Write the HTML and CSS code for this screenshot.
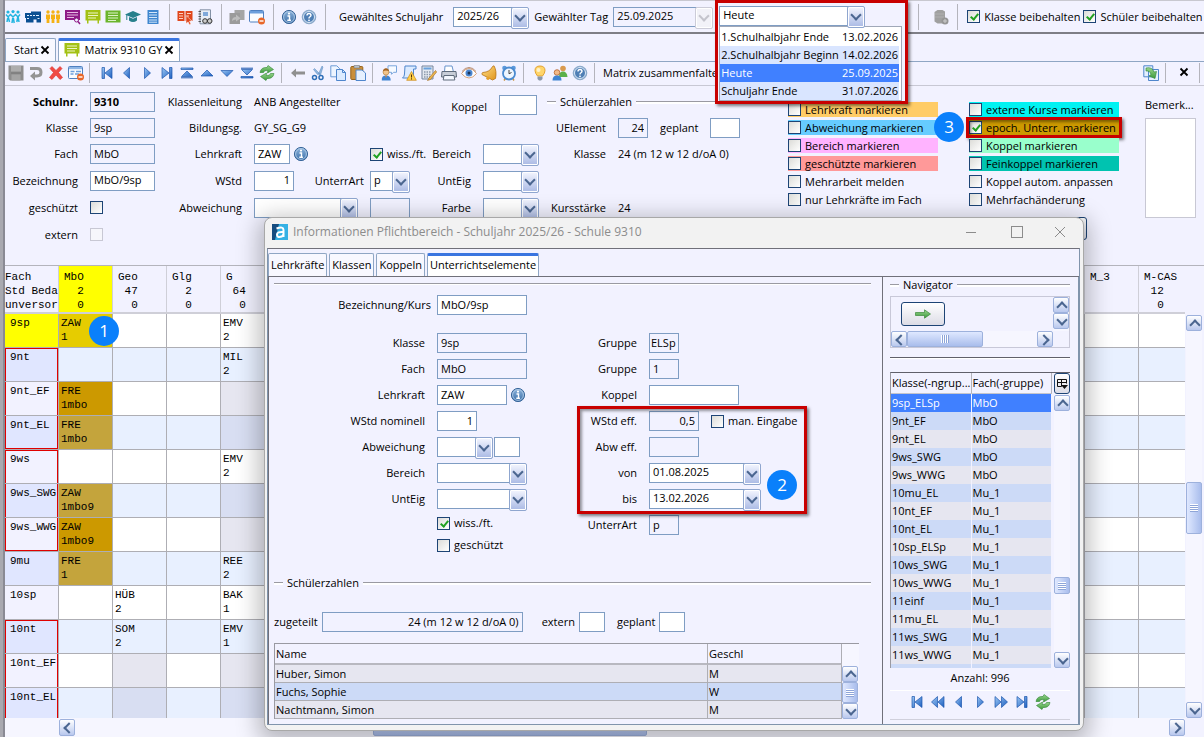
FILE: index.html
```html
<!DOCTYPE html>
<html lang="de">
<head>
   <meta charset="UTF-8">
   <meta name="viewport" content="width=device-width, initial-scale=1.0">
   <title>Matrix 9310 GY</title>
   <link rel="stylesheet" href="styles.css">
</head>
<body>
   <svg class="sprite" aria-hidden="true">
      <defs>
         <linearGradient id="g-blue" x1="0" y1="0" x2="1" y2="1">
            <stop offset="0" stop-color="#9cc8f5"/><stop offset="1" stop-color="#1d5fc0"/>
         </linearGradient>
         <linearGradient id="g-round" x1="0" y1="0" x2="0" y2="1">
            <stop offset="0" stop-color="#8db4dc"/><stop offset="1" stop-color="#3a6ea8"/>
         </linearGradient>
         <linearGradient id="g-green" x1="0" y1="0" x2="0" y2="1">
            <stop offset="0" stop-color="#9bd68f"/><stop offset="1" stop-color="#3b9a3a"/>
         </linearGradient>
         <linearGradient id="g-gold" x1="0" y1="0" x2="1" y2="1">
            <stop offset="0" stop-color="#ffe08a"/><stop offset="1" stop-color="#e0941c"/>
         </linearGradient>
      </defs>
      <symbol id="people" viewBox="0 0 16 16">
         <g fill="currentColor"><circle cx="3" cy="3" r="1.6"/><circle cx="8" cy="2.6" r="1.6"/><circle cx="13" cy="3" r="1.6"/></g>
         <path d="M1 5.5L3 8L5.5 5.5L8 8L10.5 5.5L13 8L15 5.5M3 7L2 13M3 7L4.5 13M8 7L7 14M8 7L9.2 14M13 7L11.8 13M13 7L14 13" fill="none" stroke="currentColor" stroke-width="1.5"/>
      </symbol>
      <symbol id="people-solid" viewBox="0 0 16 16">
         <g fill="currentColor"><circle cx="3" cy="3" r="1.7"/><circle cx="8" cy="3" r="1.7"/><circle cx="13" cy="3" r="1.7"/><path d="M1 5.5h4v4.5h-.6v4H1.6v-4H1zM6 5.5h4v4.5h-.6v4H6.6v-4H6zM11 5.5h4v4.5h-.6v4h-2.8v-4H11z"/></g>
      </symbol>
      <symbol id="school" viewBox="0 0 16 16">
         <path d="M0 4h6V2.500h10V13.500h-4.500V10.500h-3v3H1V9H0z" fill="#0a4f92"/>
         <path d="M2 6.500h2M5 6.500h2M8 6.500h2M11 6.500h3M2 9.500h2M12.500 9.500h2" stroke="#dfeeff" stroke-width="1.200"/>
      </symbol>
      <symbol id="board-search" viewBox="0 0 16 16">
         <path d="M0 1h15v10H0z" fill="#8e1a87"/><path d="M2 3.500h11M2 6h11M2 8.500h7" stroke="#e5b8e3"/>
         <circle cx="11.500" cy="11" r="2" fill="#f2f2ff" stroke="#8e1a87"/><path d="M13 12.500l2 2.500" stroke="#8e1a87" stroke-width="1.500"/>
      </symbol>
      <symbol id="board" viewBox="0 0 16 16">
         <path d="M.5 1h15v10.500H14v3h-1.500v-3h-9v3H2v-3H.5z" fill="#a3c114"/><path d="M3 4h10M3 6.500h10M3 9h8" stroke="#eef5c4"/>
      </symbol>
      <symbol id="list-green" viewBox="0 0 16 16">
         <path d="M.5 1.500h15v12H.5z" fill="#6bb52c"/><path d="M3 4h10M3 6.500h10M3 9h10M3 11.500h8" stroke="#dbf2c7"/>
      </symbol>
      <symbol id="hat" viewBox="0 0 16 16">
         <path d="M8 2l8 3.500-8 3.500-8-3.500z" fill="#277f8c"/><path d="M4 8v3.500q4 3 8 0V8L8 9.800z" fill="#277f8c"/><path d="M1.800 6v5" stroke="#277f8c"/>
      </symbol>
      <symbol id="sheet" viewBox="0 0 16 16">
         <path d="M2.500 1h11v14h-11z" fill="#3f86cf"/><path d="M4 3.500h8M4 6h8M4 8.500h8M4 11h8M4 13.200h8" stroke="#d3e6fa"/>
      </symbol>
      <symbol id="book-red" viewBox="0 0 16 16">
         <path d="M.5 2h7v10h-7zM8.500 2h7v10h-7z" fill="#e0461c"/><path d="M2 4.500h4M2 7h4M2 9.500h4M10 4.500h4M10 7h2" stroke="#ffd2c2"/>
         <path d="M9 6.500l6 5.500-2.500.2 1.500 2.800-1.600.7-1.300-2.800L9 14.500z" fill="#e0461c" stroke="#fff" stroke-width=".5"/>
      </symbol>
      <symbol id="binder" viewBox="0 0 16 16">
         <path d="M3 .8h10.500v14H3z" fill="#e8eef6" stroke="#8391a5"/><path d="M6 3h5v4H6z" fill="#7fa9da"/>
         <path d="M1.500 2.500h2.500M1.500 5h2.500M1.500 7.500h2.500M1.500 10h2.500M1.500 12.500h2.500" stroke="#555"/>
         <circle cx="8" cy="12" r="2.300" fill="#ccc" stroke="#333"/><circle cx="12.700" cy="12" r="2.300" fill="#ccc" stroke="#333"/>
      </symbol>
      <symbol id="copy-grey" viewBox="0 0 16 16">
         <path d="M5.500 1h10v10h-10z" fill="#a5a5a5"/><path d="M.5 4h10.500v11H.5z" fill="#9b9b9b"/><path d="M3 12q0-4 4-4V5.500l4.500 3.700L7 12.500V10.500q-2.500 0-4 1.500z" fill="#bdbdbd"/>
      </symbol>
      <symbol id="window-minus" viewBox="0 0 16 16">
         <rect x=".5" y="1.500" width="14" height="11.500" rx="1" fill="#fafcff" stroke="#4f80c0"/><path d="M1 2h13v2.500H1z" fill="#6d9fdc"/>
         <circle cx="12.500" cy="12" r="3.500" fill="#e8672a"/><path d="M10.500 12h4" stroke="#fff" stroke-width="1.400"/>
      </symbol>
      <symbol id="form-minus" viewBox="0 0 16 16">
         <rect x=".5" y="1.500" width="14" height="12" rx="1" fill="#fafcff" stroke="#4f80c0"/><path d="M1 2h13v2.200H1z" fill="#8fb6e5"/>
         <path d="M2.500 6.500h4M8 6.500h5M2.500 9h3M7 9h4" stroke="#6d9fdc" stroke-width="1.400"/>
         <circle cx="12.500" cy="12" r="3.500" fill="#e8672a"/><path d="M10.500 12h4" stroke="#fff" stroke-width="1.400"/>
      </symbol>
      <symbol id="info" viewBox="0 0 16 16">
         <circle cx="8" cy="8" r="6.600" fill="url(#g-round)" stroke="#3a679b"/><circle cx="8" cy="8" r="5.400" fill="none" stroke="#b8d0ea" stroke-width=".8"/>
         <path d="M6.500 7h2v4M6.300 11.200h3.600" stroke="#fff" stroke-width="1.400" fill="none"/><circle cx="8" cy="4.600" r="1.100" fill="#fff"/>
      </symbol>
      <symbol id="help" viewBox="0 0 16 16">
         <circle cx="8" cy="8" r="6.800" fill="#7ba0c9" stroke="#8aa8c8"/><circle cx="8" cy="8" r="5.500" fill="#4f7fb5" stroke="#dce9f7"/>
         <path d="M6 6.500q0-2 2-2t2 1.800q0 1-1.300 1.700-.7.400-.7 1.500" stroke="#fff" stroke-width="1.400" fill="none"/><circle cx="8" cy="11.300" r=".9" fill="#fff"/>
      </symbol>
      <symbol id="db-grey" viewBox="0 0 16 16">
         <path d="M1.500 3l3-2h5l2.500 1.500v10L9 14.500H4.500l-3-2z" fill="#a0a0a0"/><path d="M2 5h9M2 8h9" stroke="#b0b0b0"/><circle cx="12" cy="12" r="3.500" fill="#959595"/><path d="M10 12h4M12 10v4" stroke="#ccc"/>
      </symbol>
      <symbol id="save" viewBox="0 0 16 16">
         <path d="M.5.500h15v15H2l-1.500-1.500z" fill="#8d8d8d"/><path d="M3 1h10v5.500H3z" fill="#adadad"/><path d="M3.500 9.500h9v6h-9z" fill="#a4a4a4"/><path d="M3 8h10" stroke="#777"/>
      </symbol>
      <symbol id="undo" viewBox="0 0 16 16">
         <path d="M2 3.500h7q4 0 4 3.700t-4 3.700H6" fill="none" stroke="#949494" stroke-width="3"/><path d="M7 6.500v9L2 11z" fill="#949494"/>
      </symbol>
      <symbol id="cross" viewBox="0 0 16 16">
         <path d="M2 3.500L4 1.500 8 5.500 12 1.500l2 2L10.500 7.500 14.500 12.500l-2.500 2L8 10 4 14.500l-2.500-2L5.500 7.500z" fill="#f04a44" stroke="#d8302c" stroke-width=".6"/>
      </symbol>
      <symbol id="first" viewBox="0 0 16 16"><path d="M3 2.500h2.500v11H3zM13 2.500v11L6 8z" fill="url(#g-blue)" stroke="#1c56ad" stroke-width=".7"/></symbol>
      <symbol id="last" viewBox="0 0 16 16"><path d="M10.500 2.500H13v11h-2.500zM3 2.500v11L10 8z" fill="url(#g-blue)" stroke="#1c56ad" stroke-width=".7"/></symbol>
      <symbol id="prev" viewBox="0 0 16 16"><path d="M10.500 2.500v11L4.500 8z" fill="url(#g-blue)" stroke="#1c56ad" stroke-width=".7"/></symbol>
      <symbol id="next" viewBox="0 0 16 16"><path d="M5.500 2.500v11l6-5.500z" fill="url(#g-blue)" stroke="#1c56ad" stroke-width=".7"/></symbol>
      <symbol id="back2" viewBox="0 0 16 16"><path d="M7.500 2.500v11L1.500 8zM14 2.500v11L8 8z" fill="url(#g-blue)" stroke="#1c56ad" stroke-width=".7"/></symbol>
      <symbol id="fwd2" viewBox="0 0 16 16"><path d="M2 2.500v11L8 8zM8.500 2.500v11l6-5.500z" fill="url(#g-blue)" stroke="#1c56ad" stroke-width=".7"/></symbol>
      <symbol id="top" viewBox="0 0 16 16"><path d="M2 3h12v1.500H2zM8 6l5.500 5.500h-11z" fill="url(#g-blue)" stroke="#1c56ad" stroke-width=".7"/><path d="M2 12.800h12" stroke="#1c56ad"/></symbol>
      <symbol id="bottom" viewBox="0 0 16 16"><path d="M2 11.500h12V13H2zM8 10l5.500-5.500h-11z" fill="url(#g-blue)" stroke="#1c56ad" stroke-width=".7"/><path d="M2 3.200h12" stroke="#1c56ad"/></symbol>
      <symbol id="up" viewBox="0 0 16 16"><path d="M8 5l6 6H2z" fill="url(#g-blue)" stroke="#1c56ad" stroke-width=".7"/></symbol>
      <symbol id="down" viewBox="0 0 16 16"><path d="M8 11.500l6-6H2z" fill="url(#g-blue)" stroke="#1c56ad" stroke-width=".7"/></symbol>
      <symbol id="refresh" viewBox="0 0 16 16">
         <path d="M1 7.500Q2 2 8 2.500L9 .5 14.500 4.500 8.500 8l.3-2.500Q5 5 4.500 7.500z" fill="url(#g-green)" stroke="#2f8433" stroke-width=".6"/>
         <path d="M15 8.500Q14 14 8 13.500L7 15.500 1.500 11.500 7.500 8l-.3 2.500q3.800.5 4.300-2z" fill="url(#g-green)" stroke="#2f8433" stroke-width=".6"/>
      </symbol>
      <symbol id="back" viewBox="0 0 16 16"><path d="M1 8l5-4.500v3h9v3H6v3z" fill="#909090"/></symbol>
      <symbol id="cut" viewBox="0 0 16 16">
         <path d="M8.500 9L12 1l1 1-2.500 8zM7.500 9.500L3.500 4.500 4.500 3.500 10 9z" fill="#8fb6df" stroke="#5a89bd" stroke-width=".5"/>
         <circle cx="4.500" cy="12.500" r="2" fill="none" stroke="#2f6fb8" stroke-width="1.500"/><circle cx="11" cy="12.500" r="2" fill="none" stroke="#2f6fb8" stroke-width="1.500"/>
      </symbol>
      <symbol id="copy" viewBox="0 0 16 16"><path d="M.8.800h6l3 3v8h-9z" fill="#eef5ff" stroke="#6d9cd6"/><path d="M6.500 4.500h6l3 3v8h-9z" fill="#dcebff" stroke="#4f86cc"/><path d="M12.500 4.500v3h3" fill="none" stroke="#4f86cc"/></symbol>
      <symbol id="paste" viewBox="0 0 16 16"><rect x=".8" y="1.500" width="12" height="13" rx="1" fill="#c98f3c" stroke="#96631b"/><path d="M4 .5h5.500v2.500H4z" fill="#b9c2cc" stroke="#777" stroke-width=".6"/><path d="M6 5h6l3.500 3v7.500H6z" fill="#e6f0ff" stroke="#4f86cc"/></symbol>
      <symbol id="user-chat" viewBox="0 0 16 16">
         <path d="M7 .8h8.500v6.500h-3l-2 2v-2H7z" fill="#f6faff" stroke="#7aa6dc"/><circle cx="5" cy="7" r="3" fill="#f1c48b" stroke="#b47c34" stroke-width=".6"/><path d="M2 6.200q.5-3 3-3t3 3q-3-1.500-6 0z" fill="#a36322"/>
         <path d="M.8 15.500q-.5-5 4.200-5t4.700 5z" fill="#3e83d2"/><path d="M4 10.500l1 2.500 1-2.500" fill="#e88b2e"/>
      </symbol>
      <symbol id="scroll-warn" viewBox="0 0 16 16">
         <path d="M4 1h11v3h-2.500v9H1.500q2-1.500 2-4z" fill="#dcebff" stroke="#4f86cc"/><path d="M10.500 6.500l4.800 8.800H5.700z" fill="#ffcf4a" stroke="#cc8a15" stroke-width=".7"/><path d="M10.500 9.500v3M10.500 13.300v1.200" stroke="#553300"/>
      </symbol>
      <symbol id="calc" viewBox="0 0 16 16">
         <path d="M1 1h11v13H1z" fill="#e4e9f1" stroke="#74859d"/><path d="M2.500 2.500h8v2h-8z" fill="#69a1dc"/><path d="M3 7h7M3 9.500h7M3 12h7" stroke="#8b98ab" stroke-width="1.300" stroke-dasharray="1.500 1"/>
         <path d="M14.500 5.500l-6.500 7.500-1.500 2.500 3-1L15.600 7z" fill="url(#g-gold)" stroke="#9c6719" stroke-width=".6"/>
      </symbol>
      <symbol id="printer" viewBox="0 0 16 16">
         <path d="M4 1h7l1.500 6h-9z" fill="#fff" stroke="#6994cc"/><path d="M1 6.500h14l.5 5.500H.5z" fill="#c8ced8" stroke="#5f6b7b"/><path d="M3 10.500h10l.8 4.500H2.200z" fill="#f4f8ff" stroke="#5f6b7b"/>
      </symbol>
      <symbol id="eye" viewBox="0 0 16 16">
         <path d="M.5 8.500Q4 3.500 8 3.500t7.500 5Q12 13 8 13T.5 8.500z" fill="#fdfdff" stroke="#d5a27a"/><circle cx="8" cy="8" r="3.500" fill="#4a86d0"/><circle cx="8" cy="8" r="1.500" fill="#1d3557"/><path d="M1 6.500Q4 2.500 8 2.500t7 4" fill="none" stroke="#b68b70"/>
      </symbol>
      <symbol id="bell" viewBox="0 0 16 16">
         <path d="M13 .8Q16 6 14.500 13.500L11.500 15 1 9.500Q.5 8 1.800 7.500 9 7 11.500 1.500z" fill="url(#g-gold)" stroke="#b87414" stroke-width=".8"/><circle cx="7" cy="13.200" r="1.700" fill="#e5a12c"/>
      </symbol>
      <symbol id="clock" viewBox="0 0 16 16">
         <circle cx="3.500" cy="3" r="2.300" fill="#5b99dc"/><circle cx="12.500" cy="3" r="2.300" fill="#5b99dc"/><path d="M3 15.500l2-3M13 15.500l-2-3" stroke="#c99545" stroke-width="1.500"/>
         <circle cx="8" cy="8.500" r="6" fill="#eef6ff" stroke="#4b8bd0" stroke-width="1.800"/><path d="M8 5v3.800l2.500-1.300" fill="none" stroke="#444"/>
      </symbol>
      <symbol id="bulb" viewBox="0 0 16 16">
         <path d="M8 1q5 0 5 4.500 0 2.500-2.500 5.500h-5Q3 8 3 5.500 3 1 8 1z" fill="#ffd56a" stroke="#e3a22f"/><circle cx="6.500" cy="5" r="2" fill="#fff3c8"/><path d="M5.500 11.500h5v2.500l-1.500 1.500h-2L5.500 14z" fill="#8a97a8"/>
      </symbol>
      <symbol id="users" viewBox="0 0 16 16">
         <circle cx="11" cy="3.500" r="2.800" fill="#d99a4e"/><path d="M7 12q0-5.500 4-5.500t4.500 5.500z" fill="#5ab04a"/><circle cx="5" cy="7.500" r="2.800" fill="#f1b987" stroke="#b5602a" stroke-width=".8"/><path d="M.5 15.500q0-5 4.500-5t4.500 5z" fill="#3e83d2"/>
      </symbol>
      <symbol id="export" viewBox="0 0 16 16">
         <path d="M.8.800h9v11h-9zM5.500 4.500h10v11h-10z" fill="#e4f0ff" stroke="#4f86cc"/><path d="M3 3q6-1.500 8 4l2.500-.5L12 13.500 6 11l2-1.500Q7 5.500 3 6z" fill="url(#g-green)" stroke="#2f8433" stroke-width=".6"/>
      </symbol>
      <symbol id="go" viewBox="0 0 16 10"><path d="M.5 3.500h9V.8L15.500 5 9.500 9.200V6.500h-9z" fill="url(#g-green)" stroke="#3b8a3a" stroke-width=".7"/></symbol>
      <symbol id="columns" viewBox="0 0 12 12"><path d="M1.500 8.500v-7h9v4M1.500 4.500h9M5.500 1.500v7M1.500 8.500h4" fill="none" stroke="#111"/><path d="M5 7h7L8.500 11z" fill="#111"/></symbol>
      <symbol id="logo-a" viewBox="0 0 16 16">
         <rect width="16" height="16" fill="#35b1e4"/><path d="M0 0h7L3 16H0z" fill="#164d80"/>
         <path d="M4.500 4.500Q11.500 2 11.500 6v7M11.500 8Q5 7.500 5 10.500t3.500 2.300Q11 12.500 11.500 10" fill="none" stroke="#fff" stroke-width="2"/>
      </symbol>
      <symbol id="x" viewBox="0 0 10 10"><path d="M1.500 1.500l7 7M8.500 1.500l-7 7" stroke="currentColor" stroke-width="1.800"/></symbol>
      <symbol id="x-thin" viewBox="0 0 10 10"><path d="M0 0l10 10M10 0L0 10" stroke="currentColor" stroke-width="1"/></symbol>
   </svg>

   <div class="app">
      <header class="topbar">
         <svg class="icon cyan"><use href="#people"/></svg>
         <svg class="icon"><use href="#school"/></svg>
         <svg class="icon amber"><use href="#people-solid"/></svg>
         <svg class="icon"><use href="#board-search"/></svg>
         <svg class="icon"><use href="#board"/></svg>
         <svg class="icon"><use href="#list-green"/></svg>
         <svg class="icon"><use href="#hat"/></svg>
         <svg class="icon"><use href="#sheet"/></svg>
         <span class="sep"></span>
         <svg class="icon"><use href="#book-red"/></svg>
         <svg class="icon"><use href="#binder"/></svg>
         <span class="sep"></span>
         <svg class="icon"><use href="#copy-grey"/></svg>
         <svg class="icon"><use href="#window-minus"/></svg>
         <span class="sep"></span>
         <svg class="icon"><use href="#info"/></svg>
         <svg class="icon"><use href="#help"/></svg>
         <span class="sep"></span>
         <div class="year-pick">
            <label for="schuljahr">Gewähltes Schuljahr</label>
            <span class="combo w76"><select id="schuljahr"><option>2025/26</option></select></span>
            <label for="tag">Gewählter Tag</label>
            <span class="combo w100 off"><select id="tag" disabled><option>25.09.2025</option></select></span>
         </div>
         <div class="day-pick">
            <span class="combo w146"><select id="stichtag" aria-label="Stichtag"><option>Heute</option></select></span>
            <ul class="day-list">
               <li><span>1.Schulhalbjahr Ende</span><span>13.02.2026</span></li>
               <li><span>2.Schulhalbjahr Beginn</span><span>14.02.2026</span></li>
               <li class="active"><span>Heute</span><span>25.09.2025</span></li>
               <li><span>Schuljahr Ende</span><span>31.07.2026</span></li>
            </ul>
         </div>
         <div class="keep">
            <span class="sep"></span>
            <svg class="icon"><use href="#db-grey"/></svg>
            <span class="sep"></span>
            <label><input type="checkbox" checked>Klasse beibehalten</label>
            <label><input type="checkbox" checked>Schüler beibehalten</label>
         </div>
      </header>

      <nav class="tabs">
         <button class="tab">Start <svg><use href="#x"/></svg></button>
         <button class="tab current"><svg class="icon"><use href="#board"/></svg>Matrix 9310 GY <svg><use href="#x"/></svg></button>
      </nav>

      <div class="toolbar">
         <svg class="icon"><use href="#save"/></svg>
         <svg class="icon"><use href="#undo"/></svg>
         <svg class="icon"><use href="#cross"/></svg>
         <svg class="icon"><use href="#form-minus"/></svg>
         <span class="sep wide"></span>
         <svg class="icon"><use href="#first"/></svg>
         <svg class="icon"><use href="#prev"/></svg>
         <svg class="icon"><use href="#next"/></svg>
         <svg class="icon"><use href="#last"/></svg>
         <svg class="icon"><use href="#top"/></svg>
         <svg class="icon"><use href="#up"/></svg>
         <svg class="icon"><use href="#down"/></svg>
         <svg class="icon"><use href="#bottom"/></svg>
         <svg class="icon"><use href="#refresh"/></svg>
         <span class="sep"></span>
         <svg class="icon"><use href="#back"/></svg>
         <svg class="icon"><use href="#cut"/></svg>
         <svg class="icon"><use href="#copy"/></svg>
         <svg class="icon"><use href="#paste"/></svg>
         <span class="sep"></span>
         <svg class="icon"><use href="#user-chat"/></svg>
         <svg class="icon"><use href="#scroll-warn"/></svg>
         <svg class="icon"><use href="#calc"/></svg>
         <svg class="icon"><use href="#printer"/></svg>
         <svg class="icon"><use href="#eye"/></svg>
         <svg class="icon"><use href="#bell"/></svg>
         <svg class="icon"><use href="#clock"/></svg>
         <span class="sep"></span>
         <svg class="icon"><use href="#bulb"/></svg>
         <svg class="icon"><use href="#users"/></svg>
         <svg class="icon"><use href="#help"/></svg>
         <span class="sep"></span>
         <button class="plain">Matrix zusammenfalten</button>
         <div class="toolbar-end">
            <svg class="icon"><use href="#export"/></svg>
            <span class="sep"></span>
            <button class="plain close" aria-label="Schließen"><svg><use href="#x"/></svg></button>
            <span class="sep"></span>
         </div>
      </div>

      <section class="details">
         <div class="fields col-class">
            <div class="row"><label class="bold" for="schulnr">Schulnr.</label><input class="w65 bold" id="schulnr" value="9310" readonly></div>
            <div class="row"><label for="klasse">Klasse</label><input class="w65" id="klasse" value="9sp" readonly></div>
            <div class="row"><label for="fach">Fach</label><input class="w65" id="fach" value="MbO" readonly></div>
            <div class="row"><label for="bez">Bezeichnung</label><input class="w65" id="bez" value="MbO/9sp"></div>
            <div class="row"><label for="geschuetzt">geschützt</label><input type="checkbox" id="geschuetzt"></div>
            <div class="row"><label for="extern">extern</label><input type="checkbox" id="extern" disabled></div>
         </div>
         <div class="fields col-teacher">
            <div class="row"><span>Klassenleitung</span><span>ANB Angestellter</span></div>
            <div class="row"><span>Bildungsg.</span><span>GY_SG_G9</span></div>
            <div class="row"><label for="lehrkraft">Lehrkraft</label><span class="pair"><input class="w36" id="lehrkraft" value="ZAW"><svg class="icon"><use href="#info"/></svg></span>
               <label class="check"><input type="checkbox" checked>wiss./ft.</label></div>
            <div class="row"><label for="wstd">WStd</label><span class="pair spread"><input class="w40 num" id="wstd" value="1"><label for="uart">UnterrArt</label></span>
               <span class="combo w40"><select id="uart"><option>p</option></select></span></div>
            <div class="row"><label for="abw">Abweichung</label><span class="combo w104"><select id="abw"></select></span>
               <input class="w40" aria-label="Abweichung Wert" readonly></div>
         </div>
         <div class="fields col-area">
            <div class="row koppel"><label for="koppel">Koppel</label><input class="w38" id="koppel"></div>
            <div class="row"></div>
            <div class="row"><label for="bereich">Bereich</label><span class="combo w56"><select id="bereich"></select></span></div>
            <div class="row"><label for="unteig">UntEig</label><span class="combo w56"><select id="unteig"></select></span></div>
            <div class="row"><label for="farbe">Farbe</label><span class="combo w56"><select id="farbe"></select></span></div>
         </div>
         <div class="fields col-count">
            <div class="legend">Schülerzahlen</div>
            <div class="row"><label for="uelement">UElement</label><span class="pair gap12"><input class="w30 num" id="uelement" value="24" readonly><label for="geplant">geplant</label><input class="w30" id="geplant"></span></div>
            <div class="row"><span>Klasse</span><span>24 (m 12 w 12 d/oA 0)</span></div>
            <div class="row"></div>
            <div class="row"><span>Kursstärke</span><span>24</span></div>
         </div>
         <div class="marks">
            <label class="mark orange"><input type="checkbox">Lehrkraft markieren</label>
            <label class="mark blue"><input type="checkbox">Abweichung markieren<span class="badge badge-3">3</span></label>
            <label class="mark pink"><input type="checkbox">Bereich markieren</label>
            <label class="mark salmon"><input type="checkbox">geschützte markieren</label>
            <label class="mark"><input type="checkbox">Mehrarbeit melden</label>
            <label class="mark"><input type="checkbox">nur Lehrkräfte im Fach</label>
         </div>
         <div class="marks">
            <label class="mark cyan-bg"><input type="checkbox">externe Kurse markieren</label>
            <label class="mark gold framed"><input type="checkbox" checked>epoch. Unterr. markieren</label>
            <label class="mark mint"><input type="checkbox">Koppel markieren</label>
            <label class="mark teal"><input type="checkbox">Feinkoppel markieren</label>
            <label class="mark"><input type="checkbox">Koppel autom. anpassen</label>
            <label class="mark"><input type="checkbox">Mehrfachänderung</label>
            <button class="push" aria-label="Ausführen"></button>
         </div>
         <div class="remark">
            <label for="bemerk">Bemerk...</label>
            <textarea id="bemerk"></textarea>
         </div>
      </section>

      <section class="matrix">
         <div class="matrix-view"><table id="matrix"></table></div>
         <div class="scroll-y matrix-y">
            <button class="arrow-btn up"></button><span class="thumb grip-y"></span><button class="arrow-btn down"></button>
         </div>
         <div class="scroll-x matrix-x">
            <button class="arrow-btn left"></button><span class="thumb"></span><button class="arrow-btn right"></button>
         </div>
      </section>
   </div>

   <div class="dialog" role="dialog" aria-labelledby="dlg-title">
      <div class="titlebar">
         <svg class="icon"><use href="#logo-a"/></svg>
         <h1 id="dlg-title">Informationen Pflichtbereich - Schuljahr 2025/26 - Schule 9310</h1>
         <button class="win minimize" aria-label="Minimieren"></button>
         <button class="win maximize" aria-label="Maximieren"></button>
         <button class="win" aria-label="Schließen"><svg><use href="#x-thin"/></svg></button>
      </div>
      <div class="dialog-body">
         <nav class="dialog-tabs">
            <button class="tab">Lehrkräfte</button>
            <button class="tab">Klassen</button>
            <button class="tab">Koppeln</button>
            <button class="tab current">Unterrichtselemente</button>
         </nav>
         <div class="panes">
            <div class="pane-main">
               <hr>
               <div class="element">
                  <div class="fields element-left">
                     <div class="row first"><label for="d-bez">Bezeichnung/Kurs</label><input class="w90" id="d-bez" value="MbO/9sp"></div>
                     <div class="row"><label for="d-klasse">Klasse</label><input class="w90" id="d-klasse" value="9sp" readonly></div>
                     <div class="row"><label for="d-fach">Fach</label><input class="w90" id="d-fach" value="MbO" readonly></div>
                     <div class="row"><label for="d-lk">Lehrkraft</label><span class="pair"><input class="w70" id="d-lk" value="ZAW"><svg class="icon"><use href="#info"/></svg></span></div>
                     <div class="row"><label for="d-wstd">WStd nominell</label><input class="w40 num" id="d-wstd" value="1"></div>
                     <div class="row"><label for="d-abw">Abweichung</label><span class="pair tight"><span class="combo w56"><select id="d-abw"></select></span><input class="w26" aria-label="Abweichung Wert"></span></div>
                     <div class="row"><label for="d-bereich">Bereich</label><span class="combo w90"><select id="d-bereich"></select></span></div>
                     <div class="row"><label for="d-unteig">UntEig</label><span class="combo w90"><select id="d-unteig"></select></span></div>
                     <div class="row low"><span></span><label class="check"><input type="checkbox" checked>wiss./ft.</label></div>
                     <div class="row low"><span></span><label class="check"><input type="checkbox">geschützt</label></div>
                  </div>
                  <div class="fields element-right">
                     <div class="row"><label for="d-gr1">Gruppe</label><input class="w30" id="d-gr1" value="ELSp" readonly></div>
                     <div class="row"><label for="d-gr2">Gruppe</label><input class="w30" id="d-gr2" value="1" readonly></div>
                     <div class="row"><label for="d-koppel">Koppel</label><input class="w90" id="d-koppel"></div>
                     <div class="framed">
                        <div class="row"><label for="d-eff">WStd eff.</label><span class="pair gap12"><input class="w50 num" id="d-eff" value="0,5" readonly><label class="check"><input type="checkbox">man. Eingabe</label></span></div>
                        <div class="row"><label for="d-abweff">Abw eff.</label><input class="w50" id="d-abweff" readonly></div>
                        <div class="row"><label for="d-von">von</label><span class="combo w112"><select id="d-von"><option>01.08.2025</option></select></span></div>
                        <div class="row"><label for="d-bis">bis</label><span class="combo w112"><select id="d-bis"><option>13.02.2026</option></select></span></div>
                        <span class="badge badge-2">2</span>
                     </div>
                     <div class="row"><label for="d-uart">UnterrArt</label><input class="w30" id="d-uart" value="p" readonly></div>
                  </div>
               </div>
               <div class="legend">Schülerzahlen</div>
               <div class="counts">
                  <label for="d-zug">zugeteilt</label><input class="w201 num" id="d-zug" value="24 (m 12 w 12 d/oA 0)" readonly>
                  <label for="d-ext">extern</label><input class="w26" id="d-ext">
                  <label for="d-gepl">geplant</label><input class="w26" id="d-gepl">
               </div>
               <div class="pupils">
                  <table>
                     <thead><tr><th>Name</th><th class="sex">Geschl</th></tr></thead>
                     <tbody>
                        <tr><td>Huber, Simon</td><td>M</td></tr>
                        <tr><td>Fuchs, Sophie</td><td>W</td></tr>
                        <tr><td>Nachtmann, Simon</td><td>M</td></tr>
                     </tbody>
                  </table>
                  <div class="scroll-y"><button class="arrow-btn up"></button><span class="thumb grip-y"></span><button class="arrow-btn down"></button></div>
               </div>
            </div>
            <aside class="pane-nav">
               <div class="legend">Navigator</div>
               <div class="nav-box">
                  <div class="nav-area"><button class="push" aria-label="Weiter"><svg><use href="#go"/></svg></button></div>
                  <div class="scroll-y"><button class="arrow-btn up"></button><button class="arrow-btn down"></button></div>
                  <div class="scroll-x"><button class="arrow-btn left"></button><span class="thumb grip-x"></span><button class="arrow-btn right"></button></div>
               </div>
               <hr class="dark">
               <div class="groups">
                  <div class="groups-view">
                     <table>
                        <thead><tr><th>Klasse(-ngrup...</th><th>Fach(-gruppe)</th></tr></thead>
                        <tbody>
                           <tr class="active"><td>9sp_ELSp</td><td>MbO</td></tr>
                           <tr><td>9nt_EF</td><td>MbO</td></tr>
                           <tr><td>9nt_EL</td><td>MbO</td></tr>
                           <tr><td>9ws_SWG</td><td>MbO</td></tr>
                           <tr><td>9ws_WWG</td><td>MbO</td></tr>
                           <tr><td>10mu_EL</td><td>Mu_1</td></tr>
                           <tr><td>10nt_EF</td><td>Mu_1</td></tr>
                           <tr><td>10nt_EL</td><td>Mu_1</td></tr>
                           <tr><td>10sp_ELSp</td><td>Mu_1</td></tr>
                           <tr><td>10ws_SWG</td><td>Mu_1</td></tr>
                           <tr><td>10ws_WWG</td><td>Mu_1</td></tr>
                           <tr><td>11einf</td><td>Mu_1</td></tr>
                           <tr><td>11mu_EL</td><td>Mu_1</td></tr>
                           <tr><td>11ws_SWG</td><td>Mu_1</td></tr>
                           <tr><td>11ws_WWG</td><td>Mu_1</td></tr>
                           <tr><td></td><td></td></tr>
                        </tbody>
                     </table>
                  </div>
                  <div class="scroll-y">
                     <button class="push columns" aria-label="Spalten"><svg><use href="#columns"/></svg></button>
                     <button class="arrow-btn up"></button><span class="thumb grip-y"></span><button class="arrow-btn down"></button>
                  </div>
               </div>
               <p class="total">Anzahl: 996</p>
               <div class="pager">
                  <svg class="icon"><use href="#first"/></svg>
                  <svg class="icon"><use href="#back2"/></svg>
                  <svg class="icon"><use href="#prev"/></svg>
                  <svg class="icon"><use href="#next"/></svg>
                  <svg class="icon"><use href="#fwd2"/></svg>
                  <svg class="icon"><use href="#last"/></svg>
                  <svg class="icon"><use href="#refresh"/></svg>
               </div>
            </aside>
         </div>
      </div>
   </div>
   <script src="matrix.js"></script>
</body>
</html>
```
FILE: styles.css
```css
* {
   box-sizing: border-box;
}

body {
   margin: 0;
   height: 100vh;
   overflow: hidden;
   position: relative;
   background: #a9a9b0;
   color: #000;
   font-family: "Open Sans", "Noto Sans", sans-serif;
   font-size: 11px;
   line-height: 16px;
}

button, input, select, textarea {
   font: inherit;
   color: inherit;
   margin: 0;
}

button {
   padding: 0;
}

label, span, th, td {
   white-space: nowrap;
}

table {
   border-collapse: separate;
   border-spacing: 0;
}

.sprite {
   position: absolute;
   width: 0;
   height: 0;
}

.icon {
   width: 16px;
   height: 16px;
   flex: none;
}

.cyan {
   color: #22b5e0;
}

.amber {
   color: #f5b214;
}

.bold {
   font-weight: bold;
}

.num {
   text-align: right;
}

/* widths of fields */
.w26 { width: 26px; }
.w30 { width: 30px; }
.w36 { width: 36px; }
.w38 { width: 38px; }
.w40 { width: 40px; }
.w50 { width: 50px; }
.w56 { width: 56px; }
.w65 { width: 65px; }
.w70 { width: 70px; }
.w76 { width: 76px; }
.w90 { width: 90px; }
.w100 { width: 100px; }
.w104 { width: 104px; }
.w112 { width: 112px; }
.w146 { width: 146px; }
.w201 { width: 201px; }

/* controls */
input:not([type="checkbox"]) {
   height: 20px;
   padding: 0 3px 2px;
   border: 1px solid #7f9dc3;
   border-radius: 0;
   background: #fff;
}

input[readonly]:not([type="checkbox"]) {
   background: #f2f2ff;
}

input.bold {
   font-weight: bold;
}

#d-gr1 {
   padding: 0 1px 2px;
}

input[type="checkbox"] {
   appearance: none;
   position: relative;
   flex: none;
   width: 13px;
   height: 13px;
   border: 1px solid #1d4475;
   background: linear-gradient(135deg, #dcdcd8, #fff);
}

input[type="checkbox"]:checked::after {
   content: "";
   position: absolute;
   left: 4px;
   top: 1px;
   width: 3px;
   height: 6px;
   border: solid #21a121;
   border-width: 0 2px 2px 0;
   transform: rotate(40deg);
}

input[type="checkbox"]:disabled {
   border-color: #c8c8d4;
   background: #f6f6fb;
}

.combo {
   display: block;
   position: relative;
   height: 20px;
   padding-right: 15px;
   flex: none;
}

.combo select {
   appearance: none;
   display: block;
   width: 100%;
   height: 20px;
   padding: 0 3px 2px;
   border: 1px solid #7f9dc3;
   border-radius: 0;
   background: #fff;
   opacity: 1;
}

.combo::before {
   content: "";
   position: absolute;
   right: 0;
   top: 0;
   width: 16px;
   height: 20px;
   border: 1px solid #8fa6cf;
   border-radius: 2px;
   background: linear-gradient(#f4f6ff, #a9b9e4);
   box-shadow: inset 0 0 0 1px #fff;
}

.combo::after,
.arrow-btn::after {
   content: "";
   position: absolute;
   width: 6px;
   height: 6px;
   border: solid #4b6690;
   border-width: 0 2px 2px 0;
   transform: rotate(45deg);
}

.combo::after {
   right: 5px;
   top: 5px;
}

.combo.off select {
   background: #f2f2ff;
}

.combo.off::before {
   border-color: #ccccd8;
   background: #f2f2f8;
}

.combo.off::after {
   border-color: #c4c4cc;
}

.push {
   display: block;
   border: 1px solid #1d4475;
   border-radius: 3px;
   background: linear-gradient(#fff, #dcdce6);
}

.plain {
   border: 0;
   background: none;
}

.sep {
   width: 1px;
   height: 26px;
   margin: 0 6px;
   flex: none;
   background: #b4b4bc;
}

.scroll-y,
.scroll-x {
   display: flex;
   background: #f6f6ff;
}

.scroll-y {
   flex-direction: column;
   width: 16px;
}

.arrow-btn {
   position: relative;
   flex: none;
   width: 16px;
   height: 16px;
   border: 1px solid #9db1dc;
   border-radius: 2px;
   background: linear-gradient(#fff, #b9c8ee);
}

.arrow-btn::after {
   left: 4px;
   top: 2px;
}

.arrow-btn.up::after {
   top: 5px;
   transform: rotate(225deg);
}

.arrow-btn.left::after {
   left: 5px;
   top: 4px;
   transform: rotate(135deg);
}

.arrow-btn.right::after {
   left: 2px;
   top: 4px;
   transform: rotate(315deg);
}

.thumb {
   display: flex;
   align-items: center;
   justify-content: center;
   border: 1px solid #9db1dc;
   border-radius: 2px;
   background: linear-gradient(90deg, #dfe8ff, #a9bdec);
}

.scroll-x .thumb {
   background: linear-gradient(#dfe8ff, #a9bdec);
}

.grip-y::after,
.grip-x::after {
   content: "";
   width: 8px;
   height: 8px;
   background: repeating-linear-gradient(#fff 0 1px, #8ea5d8 1px 2px);
}

.grip-x::after {
   background: repeating-linear-gradient(90deg, #fff 0 1px, #8ea5d8 1px 2px);
}

/* numbered hints */
.badge {
   position: absolute;
   z-index: 3;
   width: 30px;
   height: 30px;
   border-radius: 50%;
   background: #0a80fb;
   color: #fff;
   font-family: "Open Sans", sans-serif;
   font-size: 17px;
   line-height: 30px;
   text-align: center;
}

.framed {
   position: relative;
}

.framed::after {
   content: "";
   position: absolute;
   inset: -3px;
   border: 3px solid #c80000;
   box-shadow: 2px 2px 3px rgba(0, 0, 0, 0.5), inset 2px 2px 3px rgba(0, 0, 0, 0.4);
   pointer-events: none;
}

/* main window */
.app {
   display: flex;
   flex-direction: column;
   height: 100vh;
   margin-left: 3px;
   border-left: 2px solid #8a8a94;
   background: #f2f2ff;
}

.topbar {
   display: flex;
   align-items: center;
   gap: 4px;
   height: 34px;
   border-top: 1px solid #c8c8d0;
   border-bottom: 2px solid #7e7e86;
}

.topbar > .sep {
   margin: 0 3px 0 4px;
}

.year-pick {
   display: flex;
   align-items: center;
   gap: 5px;
   margin-left: 6px;
}

.year-pick label:first-child {
   margin-right: 5px;
}

.day-pick {
   position: relative;
   align-self: flex-start;
   z-index: 4;
   width: 193px;
   height: 104px;
   flex: none;
   margin: -1px 0 0 -2px;
   padding: 3px 3px 0 1px;
   border: 3px solid #c80000;
   background: #f2f2ff;
   box-shadow: 2px 2px 3px rgba(0, 0, 0, 0.5);
}

.day-list {
   margin: 0;
   padding: 1px 2px 0 0;
   list-style: none;
   border: 1px solid #a0a8b8;
   background: #fff;
}

.day-list li {
   display: flex;
   justify-content: space-between;
   height: 18px;
   padding: 0 1px;
   line-height: 18px;
}

.day-list li:nth-child(even) {
   background: #d9e5ff;
}

.day-list li.active {
   background: #4080ff;
   color: #fff;
}

.keep {
   display: flex;
   align-items: center;
   margin-left: auto;
   padding-right: 6px;
}

.keep .icon {
   margin: 0 2px 0 8px;
}

.keep label {
   display: flex;
   align-items: center;
   gap: 4px;
   margin-left: 3px;
}

.tabs {
   display: flex;
   align-items: flex-end;
   gap: 2px;
   height: 28px;
   border-bottom: 1px solid #8fa6c4;
}

.tab {
   display: flex;
   align-items: center;
   gap: 2px;
   height: 23px;
   padding: 0 5px 0 8px;
   border: 1px solid #8fa6c4;
   border-bottom: 0;
   border-radius: 2px 2px 0 0;
   background: #f8f8ff;
   white-space: nowrap;
}

.tab.current {
   padding: 0 5px 2px;
   border-top: 3px solid #3a75e0;
   background: #fff;
}

.tab .icon {
   margin-right: 2px;
}

.tab svg:not(.icon) {
   width: 10px;
   height: 10px;
}

.toolbar {
   display: flex;
   align-items: center;
   gap: 4px;
   height: 24px;
   padding: 0 0 2px 3px;
   border-bottom: 1px solid #c8c8d4;
}

.toolbar .sep {
   height: 20px;
   margin: 0 4px 0 2px;
}

.toolbar .sep.wide {
   margin: 0 5px 0 1px;
}

.toolbar-end {
   display: flex;
   align-items: center;
   margin-left: auto;
   gap: 4px;
}

.toolbar .close {
   width: 19px;
   height: 16px;
}

.close svg {
   width: 10px;
   height: 10px;
}

.fields .row {
   display: grid;
   grid-template-columns: var(--label) 1fr;
   column-gap: 12px;
   align-items: center;
   height: 26px;
}

.row > :first-child {
   justify-self: end;
}

.pair {
   display: flex;
   align-items: center;
   gap: 3px;
}

.pair.gap12 {
   gap: 12px;
}

.pair.tight {
   gap: 1px;
}

.pair.spread {
   justify-content: space-between;
}

.check {
   display: flex;
   align-items: center;
   gap: 4px;
}

.details {
   display: flex;
   height: 180px;
   flex: none;
   padding: 3px 8px 0 0;
   border-bottom: 1px solid #b4b4bc;
}

.details .row:nth-child(n+4) {
   height: 27px;
}

.col-class {
   --label: 73px;
   width: 150px;
}

.col-teacher {
   width: 273px;
}

.col-teacher .row {
   grid-template-columns: 87px 110px 1fr;
   column-gap: 12px;
}

.col-teacher .row > :nth-child(3) {
   margin-left: -6px;
}

.col-area {
   --label: 43px;
   width: 111px;
}

.col-area .row.koppel {
   display: flex;
   align-items: flex-end;
   justify-content: flex-end;
   gap: 12px;
   padding-right: 2px;
}

.col-count {
   --label: 59px;
   flex: 1;
   margin: 0 12px 0 8px;
}

.legend {
   display: flex;
   align-items: center;
   gap: 4px;
   height: 16px;
}

.legend::before,
.legend::after {
   content: "";
   width: 9px;
   height: 2px;
   border-top: 1px solid #9a9aa2;
   background: #fff;
}

.legend::after {
   flex: 1;
}

.col-count .legend {
   height: 26px;
}

.marks {
   display: flex;
   flex-direction: column;
   gap: 3px;
   width: 150px;
   flex: none;
   margin: 13px 0 0;
}

.marks + .marks {
   margin: 13px 26px 0 31px;
}

.mark {
   position: relative;
   display: flex;
   align-items: center;
   gap: 4px;
   height: 15px;
}

.orange { background: #ffcc66; }
.blue { background: #66ccff; }
.pink { background: #ffb3ff; }
.salmon { background: #ff9999; }
.cyan-bg { background: #00f2f2; }
.gold { background: #cc9900; }
.mint { background: #99ffcc; }
.teal { background: #00c3b0; }

.badge-3 {
   right: -26px;
   top: -8px;
}

.marks .push {
   width: 88px;
   height: 23px;
   margin: 7px 0 0 30px;
   flex: none;
}

.remark {
   width: 51px;
   flex: none;
   padding-top: 8px;
}

.remark textarea {
   display: block;
   width: 100%;
   height: 100px;
   margin-top: 5px;
   padding: 0;
   border: 1px solid #c8c8d4;
   resize: none;
}

/* matrix */
.matrix {
   display: grid;
   grid-template-columns: 1fr 19px;
   grid-template-rows: 1fr 19px;
   flex: 1;
   min-height: 0;
}

.matrix-view {
   overflow: hidden;
   min-width: 0;
   min-height: 0;
}

#matrix {
   width: 1188px;
   table-layout: fixed;
   font-family: "Liberation Mono", monospace;
   font-size: 11px;
   line-height: 14px;
}

#matrix th,
#matrix td {
   position: relative;
   padding: 2px 0 0 2px;
   border-right: 1px solid #aeaeb4;
   border-bottom: 1px solid #aeaeb4;
   font-weight: normal;
   text-align: left;
   vertical-align: top;
   white-space: pre;
}

#matrix thead th {
   height: 48px;
   padding: 4px 0 0 5px;
   border-right-color: #cfcfd8;
   border-bottom: 2px solid #cfcfd8;
}

#matrix thead th:first-child {
   padding-left: 0;
}

#matrix thead th.picked {
   background: #ffff00;
}

#matrix tbody th {
   height: 34px;
   padding-left: 5px;
}

#matrix tbody td {
   background: #fff;
}

#matrix tbody tr:nth-child(even) th {
   background: #e0e6ff;
}

#matrix tbody tr:nth-child(even) td {
   background: #e8f0ff;
}

#matrix tbody td.none {
   background: #e6e6f0;
}

#matrix tbody tr:nth-child(even) td.none {
   background: #d8def2;
}

#matrix tbody td.epoch {
   background: #cc9900;
}

#matrix tbody tr:nth-child(even) td.epoch {
   background: #c4a43c;
}

#matrix tbody tr:first-child th {
   background: #ffff00;
}

#matrix tbody tr:first-child td.epoch {
   background: #e6cc00;
}

#matrix th.open { box-shadow: inset 1px 1px #e00000, inset -1px 0 #e00000; }
#matrix th.mid { box-shadow: inset 1px 0 #e00000, inset -1px 0 #e00000; }
#matrix th.end { box-shadow: inset 1px 0 #e00000, inset -1px -1px #e00000; }

.badge-1 {
   left: 30px;
   top: 2px;
}

.matrix-y {
   margin: 49px 0 0 1px;
}

.matrix-y .thumb {
   height: 52px;
   margin: 151px 0 auto;
}

.matrix-x {
   grid-column: 1;
   padding: 1px 0 1px 54px;
}

.matrix-x .thumb {
   width: 274px;
   margin: 0 auto 0 298px;
}

.matrix-x .arrow-btn,
.matrix-x .thumb {
   height: 17px;
}

/* dialog */
.dialog {
   position: absolute;
   z-index: 2;
   left: 264px;
   right: 120px;
   top: 217px;
   bottom: 6px;
   display: flex;
   flex-direction: column;
   padding: 0 3px 5px 2px;
   border: 1px solid #a8a8a8;
   border-radius: 8px;
   background: #f2f2f2;
   box-shadow: 0 6px 22px 6px rgba(0, 0, 0, 0.25);
}

.titlebar {
   display: flex;
   align-items: center;
   height: 30px;
   flex: none;
   padding: 0 0 2px 5px;
   color: #8c8c8c;
}

.titlebar h1 {
   flex: 1;
   margin: 0 0 0 5px;
   font-size: 12px;
   font-weight: normal;
   white-space: nowrap;
}

.win {
   display: flex;
   align-items: center;
   justify-content: center;
   width: 46px;
   height: 28px;
   border: 0;
   background: none;
   color: #8c8c8c;
}

.win:last-child {
   width: 40px;
}

.win svg,
.maximize::after {
   width: 10px;
   height: 10px;
}

.maximize::after {
   content: "";
   border: 1px solid #8c8c8c;
}

.minimize::after {
   content: "";
   width: 10px;
   border-top: 1px solid #8c8c8c;
}

.dialog-body {
   display: flex;
   flex-direction: column;
   flex: 1;
   min-height: 0;
   border: 1px solid #8094ac;
   border-top-color: #70707a;
   background: #f2f2ff;
}

.dialog-tabs {
   display: flex;
   align-items: flex-end;
   gap: 2px;
   height: 27px;
   flex: none;
}

.dialog-tabs .tab {
   padding: 0 2px;
}

.dialog-tabs .tab.current {
   padding: 0 2px 2px;
}

.panes {
   display: flex;
   flex: 1;
   min-height: 0;
   border-top: 1px solid #70707a;
   border-left: 1px solid #70707a;
}

.pane-main {
   flex: 1;
   padding: 6px 11px 0 5px;
   border-right: 1px solid #70707a;
   overflow: hidden;
}

hr {
   height: 2px;
   margin: 0;
   border: 0;
   border-top: 1px solid #9a9aa2;
   background: #fff;
}

.element {
   display: flex;
   align-items: flex-start;
   padding-top: 7px;
}

.element-left {
   --label: 151px;
   width: 303px;
}

.element-left .row.first {
   margin-bottom: 12px;
}

.element-left .row.first label {
   margin-right: -6px;
}

.element-left .row.low {
   height: 22px;
}

.element-right {
   --label: 57px;
   width: 230px;
   padding: 38px 0 0 3px;
}

.element-right .framed {
   margin: 0 0 0 -3px;
   padding: 0 0 0 3px;
}

.element-right .framed::after {
   inset: -2px 0 -2px 0;
}

.badge-2 {
   right: 10px;
   bottom: 12px;
}

.pane-main > .legend {
   margin-top: 19px;
}

.counts {
   display: flex;
   align-items: center;
   gap: 4px;
   padding: 21px 0 11px;
}

.counts input + label {
   margin-left: 8px;
}

.counts .num + label {
   margin-left: 15px;
}

.pupils {
   display: flex;
   margin-right: 12px;
   border-top: 1px solid #9a9aa2;
   border-left: 1px solid #9a9aa2;
}

.pupils table {
   flex: 1;
   table-layout: fixed;
}

.pupils th,
.pupils td {
   height: 18px;
   padding: 0 1px;
   border-right: 1px solid #aeaeb4;
   border-bottom: 1px solid #aeaeb4;
   font-weight: normal;
   line-height: 16px;
   text-align: left;
}

.pupils th {
   height: 21px;
   border-bottom: 2px solid #b8b8c0;
}

.pupils .sex {
   width: 134px;
}

.pupils tbody tr {
   background: #e6e6f0;
}

.pupils tbody tr:nth-child(even) {
   background: #ccdaf7;
}

.pupils .scroll-y {
   padding-top: 22px;
   width: 17px;
}

.pupils .thumb {
   flex: 1;
   width: 16px;
}

.pane-nav {
   display: flex;
   flex-direction: column;
   flex: none;
   width: 196px;
   padding: 0 8px 4px 7px;
   border-right: 1px solid #8094ac;
}

.nav-box {
   display: grid;
   grid-template-columns: 1fr 16px;
   margin-top: 3px;
   border: 1px solid #c8c8d8;
}

.nav-area {
   height: 34px;
   padding: 5px 10px;
}

.nav-area .push {
   width: 44px;
   height: 24px;
}

.nav-area svg {
   display: block;
   width: 16px;
   height: 10px;
   margin: auto;
}

.nav-box .thumb {
   width: 76px;
   margin-right: auto;
}

.pane-nav hr.dark {
   margin: 9px 0 13px;
   border-top-color: #60606a;
}

.groups {
   display: flex;
   flex: 1;
   min-height: 0;
   border-top: 1px solid #60606a;
   border-left: 1px solid #9a9aa2;
}

.groups-view {
   flex: 1;
   overflow: hidden;
}

.groups table {
   width: 100%;
   table-layout: fixed;
}

.groups th,
.groups td {
   height: 18px;
   padding: 0 1px;
   border-right: 1px solid #f2f2ff;
   font-weight: normal;
   line-height: 18px;
   text-align: left;
}

.groups th {
   height: 21px;
   border-right-color: #b4b4bc;
   border-bottom: 1px solid #c4c4cc;
}

.groups tbody tr {
   background: #e6e6f0;
}

.groups tbody tr:nth-child(even) {
   background: #ccdaf7;
}

.groups tbody tr.active {
   background: #4080ff;
   color: #fff;
}

.groups .scroll-y {
   margin-left: 2px;
}

.columns {
   width: 16px;
   height: 21px;
   flex: none;
   margin-bottom: 1px;
}

.columns svg {
   display: block;
   width: 12px;
   height: 12px;
   margin: auto;
}

.groups .thumb {
   height: 17px;
   margin: auto 0 58px;
}

.total {
   margin: 2px 0 4px;
   text-align: center;
}

.pager {
   display: flex;
   justify-content: center;
   gap: 5px;
   padding: 3px 0 9px;
   border-top: 1px solid #fff;
   border-bottom: 1px solid #d0d0dc;
}
```
FILE: matrix.js
```js
const COLUMNS = 21;

const heads = {
   0: 'MbO\n  2\n  0',
   1: 'Geo\n 47\n  0',
   2: 'Glg\n  2\n  0',
   3: 'G\n 64\n  0',
   19: 'M_3',
   20: 'M-CAS\n 12\n  0',
};

// name, border of the group, cells by column, columns that are not open
const rows = [
   { name: '9sp', cells: { 0: 'ZAW\n1', 3: 'EMV\n2' }, epoch: true, hint: 1 },
   { name: '9nt', edge: 'open', cells: { 3: 'MIL\n2' } },
   { name: '9nt_EF', edge: 'mid', cells: { 0: 'FRE\n1mbo' }, epoch: true, none: [3] },
   { name: '9nt_EL', edge: 'end', cells: { 0: 'FRE\n1mbo' }, epoch: true, none: [3] },
   { name: '9ws', edge: 'open', cells: { 3: 'EMV\n2' } },
   { name: '9ws_SWG', edge: 'mid', cells: { 0: 'ZAW\n1mbo9' }, epoch: true, none: [3] },
   { name: '9ws_WWG', edge: 'end', cells: { 0: 'ZAW\n1mbo9' }, epoch: true, none: [3] },
   { name: '9mu', cells: { 0: 'FRE\n1', 3: 'REE\n2' }, epoch: true },
   { name: '10sp', cells: { 1: 'HÜB\n2', 3: 'BAK\n1' } },
   { name: '10nt', edge: 'open', cells: { 1: 'SOM\n2', 3: 'EMV\n1' } },
   { name: '10nt_EF', edge: 'mid', cells: {}, none: [1, 3] },
   { name: '10nt_EL', edge: 'mid', cells: {}, none: [1, 3] },
];

function cell(tag, text, className) {
   const el = document.createElement(tag);
   el.textContent = text || '';
   if (className) el.className = className;
   return el;
}

const table = document.getElementById('matrix');
const headRow = table.createTHead().insertRow();
headRow.appendChild(cell('th', 'Fach\nStd Beda\nunversor'));
for (let i = 0; i < COLUMNS; i++) {
   headRow.appendChild(cell('th', heads[i], i === 0 ? 'picked' : ''));
}

const body = table.createTBody();
rows.forEach((row) => {
   const tr = body.insertRow();
   tr.appendChild(cell('th', row.name, row.edge));
   for (let i = 0; i < COLUMNS; i++) {
      let className = '';
      if (i === 0 && row.epoch) className = 'epoch';
      if (row.none && row.none.includes(i)) className = 'none';
      const td = cell('td', row.cells[i], className);
      if (i === 0 && row.hint) {
         td.appendChild(cell('span', String(row.hint), 'badge badge-1'));
      }
      tr.appendChild(td);
   }
});
```
